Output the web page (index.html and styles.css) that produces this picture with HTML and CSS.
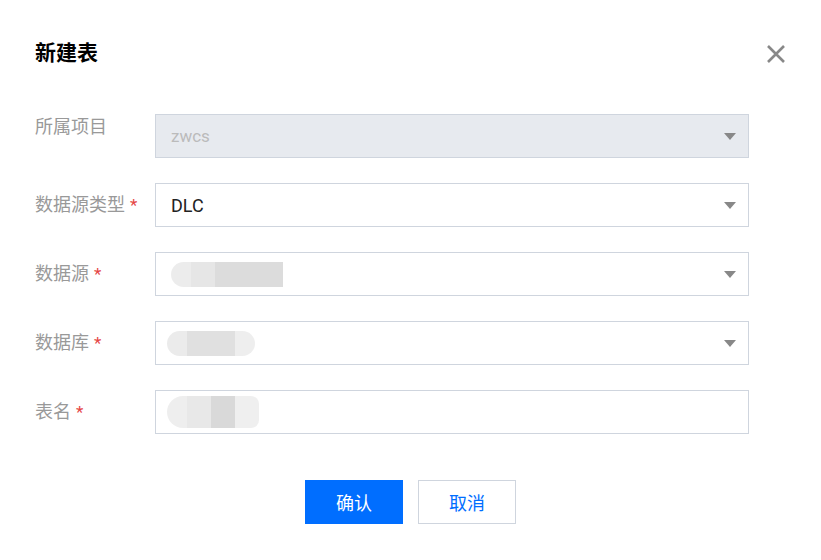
FILE: index.html
```html
<!DOCTYPE html>
<html lang="zh">
<head>
<meta charset="utf-8">
<link rel="stylesheet" href="styles.css">
</head>
<body>
<div class="dialog">
  <div class="header">
    <h1 class="title">新建表</h1>
    <span class="close" aria-label="close">
      <svg width="20" height="20" viewBox="0 0 20 20"><path d="M2 2L18 18M18 2L2 18" stroke="#888" stroke-width="2.6" fill="none"/></svg>
    </span>
  </div>
  <div class="form">
    <div class="row">
      <div class="label label-top">所属项目</div>
      <div class="field disabled"><span class="val muted">zwcs</span><span class="arrow"></span></div>
    </div>
    <div class="row">
      <div class="label">数据源类型<span class="req">*</span></div>
      <div class="field"><span class="val">DLC</span><span class="arrow"></span></div>
    </div>
    <div class="row">
      <div class="label">数据源<span class="req">*</span></div>
      <div class="field"><span class="blob blob1"></span><span class="arrow"></span></div>
    </div>
    <div class="row">
      <div class="label">数据库<span class="req">*</span></div>
      <div class="field"><span class="blob blob2"></span><span class="arrow"></span></div>
    </div>
    <div class="row">
      <div class="label">表名<span class="req">*</span></div>
      <div class="field"><span class="blob blob3"></span></div>
    </div>
  </div>
  <div class="footer">
    <button class="btn primary">确认</button>
    <button class="btn">取消</button>
  </div>
</div>
</body>
</html>
```
FILE: styles.css
```css
* { box-sizing: border-box; }
html, body { margin: 0; padding: 0; background: #fff; }
body { font-family: Roboto, "Noto Sans CJK SC", sans-serif; width: 821px; height: 560px; overflow: hidden; }
.dialog { padding: 38px 35px 0 35px; }
.header { display: flex; justify-content: space-between; align-items: center; height: 30px; }
.title { margin: 0; font-size: 21px; font-weight: 700; color: #000; line-height: 30px; }
.close { display: flex; width: 20px; height: 20px; margin-right: 0; margin-top: 2px; }
.form { display: flex; flex-direction: column; gap: 25px; margin-top: 46px; }
.row { display: flex; align-items: center; height: 44px; }
.label { width: 120px; font-size: 18px; color: #999; line-height: 24px; display: flex; align-items: center; }
.label-top { align-self: flex-start; margin-top: 1px; }
.req { color: #e54545; margin-left: 5px; font-size: 17px; }
.field { width: 594px; height: 44px; border: 1px solid #cfd5de; background: #fff; display: flex; align-items: center; justify-content: space-between; padding: 0 12px 0 15px; position: relative; }
.field.disabled { background: #e7eaef; }
.val { font-size: 18px; color: #222; }
.val.muted { color: #bbb; font-size: 17px; }
.arrow { width: 0; height: 0; border-left: 6px solid transparent; border-right: 6px solid transparent; border-top: 7px solid #888; margin-left: auto; }
.blob { display: block; height: 25px; border-radius: 13px 0 0 13px; }
.blob1 { width: 112px; background: linear-gradient(90deg, #ececec 0, #ececec 20px, #e6e6e6 20px, #e6e6e6 44px, #dcdcdc 44px, #dcdcdc 112px); }
.blob2 { width: 88px; border-radius: 13px; background: linear-gradient(90deg, #ebebeb 0, #ebebeb 20px, #e0e0e0 20px, #e0e0e0 68px, #eeeeee 68px); margin-left: -4px; }
.blob3 { width: 92px; height: 32px; border-radius: 16px 8px 8px 16px; background: linear-gradient(90deg, #eeeeee 0, #eeeeee 20px, #e8e8e8 20px, #e8e8e8 44px, #d9d9d9 44px, #d9d9d9 68px, #efefef 68px); margin-left: -4px; }
.footer { display: flex; justify-content: center; gap: 15px; margin-top: 46px; padding-right: 0; }
.btn { width: 98px; height: 44px; border: 1px solid #cfd5de; background: #fff; color: #006eff; font-family: Roboto, "Noto Sans CJK SC", sans-serif; font-size: 18px; padding: 0; cursor: pointer; }
.btn.primary { background: #006eff; border-color: #006eff; color: #fff; }
```
